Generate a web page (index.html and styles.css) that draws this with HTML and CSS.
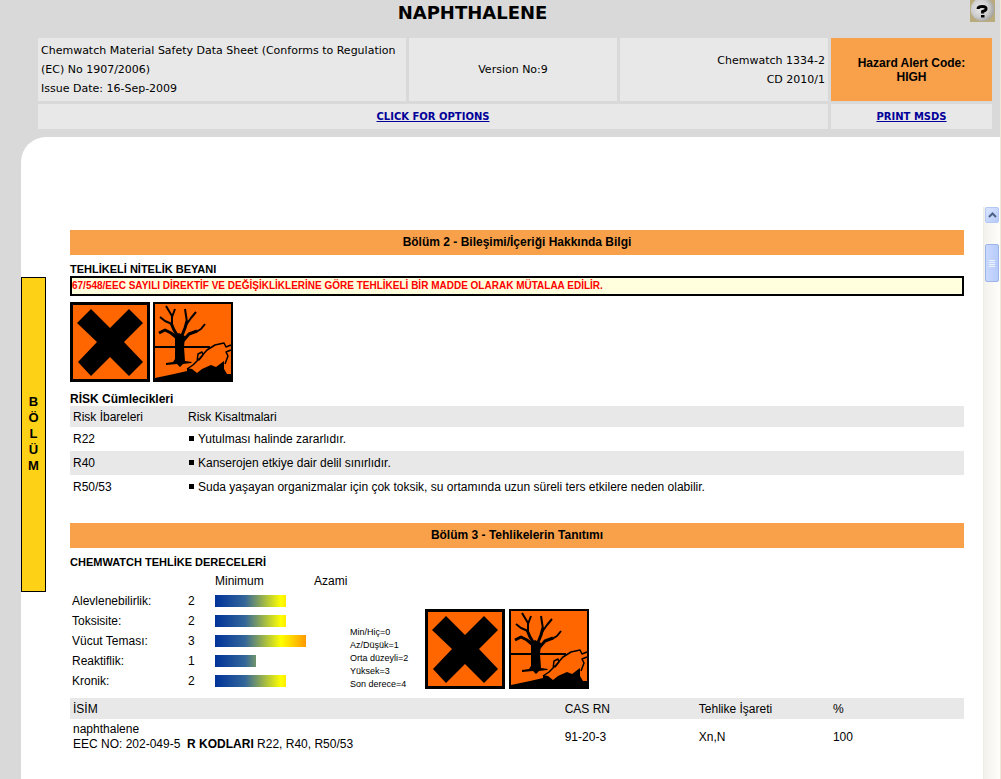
FILE: index.html
```html
<!DOCTYPE html>
<html lang="tr">
<head>
<meta charset="utf-8">
<title>Naphthalene</title>
<link rel="stylesheet" href="styles.css">
</head>
<body>
<svg class="symbols" aria-hidden="true">
  <symbol id="harmful" viewBox="0 0 80 80">
    <rect width="80" height="80" fill="#000"/>
    <rect x="3" y="3" width="74" height="74" fill="#ff6600"/>
    <path d="M7 21 21 7 40 26 59 7 73 21 54 40 73 60 59 74 40 55 21 74 8 60 27 40Z"/>
  </symbol>
  <symbol id="environment" viewBox="0 0 80 80">
    <rect width="80" height="80" fill="#000"/>
    <rect x="2" y="2" width="76" height="76" fill="#ff6600"/>
    <path d="M2 45H57" stroke="#000" stroke-width="2"/>
    <path d="M22 34 26 31 32 34 31 45 32 59 39 60 38 61 30 62 27 65 24 62 13 63 13 61 20 60 22 57Z"/>
    <g fill="none" stroke="#000" stroke-linejoin="round">
      <path d="M6 31 12 28 18 31 24 36M18 21 21 28 26 36M34 19 32 26 28 36M44 29 36 32 30 39" stroke-width="3"/>
      <path d="M7 15 12 19 19 22M13 4 19 14 19 24M22 7 19 15M32 7 34 20M43 10 38 16 33 23M52 22 48 27 43 30" stroke-width="2"/>
      <path d="M34 67 40 63 47 56 54 48 62 43 71 41 73 45 78 43M78 48 73 50 75 54 72 62M44 60 45 52 49 50 50 53 46 58" stroke-width="1.500"/>
    </g>
    <path d="M2 76 21 72 34 69 34 66 39 67 44 71 49 67 58 63 63 65 71 59 71 67 74 72 78 72 78 78 2 78Z"/>
  </symbol>
</svg>

<div class="page">
  <header class="masthead">
    <div class="title-row">
      <h1 class="title">NAPHTHALENE</h1>
      <button class="help" type="button" aria-label="Help">
        <svg viewBox="0 0 25 22" width="25" height="22">
          <defs>
            <radialGradient id="ball" cx=".4" cy=".45" r=".6">
              <stop offset="0" stop-color="#e9e9e9"/>
              <stop offset=".6" stop-color="#cfcfcf"/>
              <stop offset="1" stop-color="#a2a2a0"/>
            </radialGradient>
          </defs>
          <rect width="25" height="22" fill="#b9ab7c"/>
          <circle cx="12.5" cy="9.5" r="11.8" fill="url(#ball)"/>
          <path d="M8 9Q8 6.500 12.300 6.500T16 9Q16 10.500 12.600 11.500V13.500" fill="none" stroke="#000" stroke-width="3"/>
          <rect x="11" y="15" width="3.500" height="2.500"/>
        </svg>
      </button>
    </div>
    <div class="info">
      <div class="cell">Chemwatch Material Safety Data Sheet (Conforms to Regulation (EC) No 1907/2006)<br>Issue Date: 16-Sep-2009</div>
      <div class="cell center">Version No:9</div>
      <div class="cell right">Chemwatch 1334-2<br>CD 2010/1</div>
      <div class="cell alert">Hazard Alert Code:<br>HIGH</div>
      <div class="cell center options"><a href="#options">CLICK FOR OPTIONS</a></div>
      <div class="cell center"><a href="#print">PRINT MSDS</a></div>
    </div>
  </header>

  <div class="panel">
    <aside class="tab"><span>B</span><span>Ö</span><span>L</span><span>Ü</span><span>M</span></aside>

    <main class="content">
      <section class="section">
        <h2 class="bar">Bölüm 2 - Bileşimi/İçeriği Hakkında Bilgi</h2>
        <h3 class="sub caps">TEHLİKELİ NİTELİK BEYANI</h3>
        <p class="notice">67/548/EEC SAYILI DİREKTİF VE DEĞİŞİKLİKLERİNE GÖRE TEHLİKELİ BİR MADDE OLARAK MÜTALAA EDİLİR.</p>
        <div class="signs">
          <svg class="sign"><use href="#harmful"/></svg>
          <svg class="sign"><use href="#environment"/></svg>
        </div>
        <h3 class="sub">RİSK Cümlecikleri</h3>
        <table class="grid risks">
          <thead><tr><th>Risk İbareleri</th><th>Risk Kisaltmalari</th></tr></thead>
          <tbody>
            <tr><td>R22</td><td><i class="dot"></i>Yutulması halinde zararlıdır.</td></tr>
            <tr><td>R40</td><td><i class="dot"></i>Kanserojen etkiye dair delil sınırlıdır.</td></tr>
            <tr><td>R50/53</td><td><i class="dot"></i>Suda yaşayan organizmalar için çok toksik, su ortamında uzun süreli ters etkilere neden olabilir.</td></tr>
          </tbody>
        </table>
      </section>

      <section class="section">
        <h2 class="bar">Bölüm 3 - Tehlikelerin Tanıtımı</h2>
        <h3 class="sub caps">CHEMWATCH TEHLİKE DERECELERİ</h3>
        <div class="ratings-row">
          <table class="ratings">
            <thead><tr><th></th><th></th><th>Minimum</th><th>Azami</th></tr></thead>
            <tbody>
              <tr><td>Alevlenebilirlik:</td><td>2</td><td colspan="2"><div class="meter level-2"></div></td></tr>
              <tr><td>Toksisite:</td><td>2</td><td colspan="2"><div class="meter level-2"></div></td></tr>
              <tr><td>Vücut Teması:</td><td>3</td><td colspan="2"><div class="meter level-3"></div></td></tr>
              <tr><td>Reaktiflik:</td><td>1</td><td colspan="2"><div class="meter level-1"></div></td></tr>
              <tr><td>Kronik:</td><td>2</td><td colspan="2"><div class="meter level-2"></div></td></tr>
            </tbody>
          </table>
          <div class="legend">Min/Hiç=0<br>Az/Düşük=1<br>Orta düzeyli=2<br>Yüksek=3<br>Son derece=4</div>
          <div class="signs">
            <svg class="sign"><use href="#harmful"/></svg>
            <svg class="sign"><use href="#environment"/></svg>
          </div>
        </div>
        <table class="grid names">
          <thead><tr><th>İSİM</th><th>CAS RN</th><th>Tehlike İşareti</th><th>%</th></tr></thead>
          <tbody>
            <tr><td>naphthalene<br>EEC NO: 202-049-5&nbsp; <b>R KODLARI</b> R22, R40, R50/53</td><td>91-20-3</td><td>Xn,N</td><td>100</td></tr>
          </tbody>
        </table>
      </section>
    </main>

    <div class="scroll">
      <button class="scroll-up" type="button" aria-label="Scroll up">
        <svg viewBox="0 0 9 6" width="9" height="6"><path d="M1 5 4.500 1.500 8 5" fill="none" stroke="#4d6185" stroke-width="2"/></svg>
      </button>
      <div class="thumb"><i></i><i></i><i></i><i></i></div>
    </div>
  </div>
</div>
</body>
</html>
```
FILE: styles.css
```css
* { box-sizing: border-box; }

body {
  margin: 0;
  overflow: hidden;
  background: #d9d9d9;
  color: #000;
  font: 12px/14px "Liberation Sans", Arial, sans-serif;
}

h1, h2, h3, p { margin: 0; font-size: inherit; }

.symbols { position: absolute; width: 0; height: 0; }

.page {
  display: flex;
  flex-direction: column;
  height: 100vh;
  border-right: 1px solid #ece9d8;
}

.masthead {
  flex: none;
  padding-bottom: 8px;
  font: 11px/19px "DejaVu Sans", Verdana, sans-serif;
}

.title-row { display: flex; gap: 25px; height: 38px; padding-right: 5px; }

.title {
  flex: 1;
  text-align: center;
  font-size: 18px;
  line-height: 26px;
}

.help { width: 25px; height: 22px; padding: 0; border: 0; background: none; }
.help svg { display: block; }

.info {
  display: grid;
  grid-template-columns: 368fr 208fr 208fr 161fr;
  grid-template-rows: minmax(63px, auto) 25px;
  gap: 3px;
  margin: 0 8px 0 38px;
}

.cell {
  display: flex;
  flex-direction: column;
  justify-content: center;
  padding: 0 3px;
  background: #e8e8e8;
}
.cell.center { text-align: center; }
.cell.right { text-align: right; }
.cell.options { grid-column: span 3; }
.cell a { color: #000099; font-size: 10px; font-weight: bold; }

.cell.alert {
  background: #f8a04a;
  font: bold 12px/14px "Liberation Sans", Arial, sans-serif;
  text-align: center;
}

.panel {
  flex: 1;
  display: grid;
  grid-template-columns: 25px 1fr 17px;
  align-items: start;
  min-height: 0;
  margin-left: 21px;
  padding-top: 70px;
  overflow: hidden;
  background: #fff;
  border-top-left-radius: 25px;
}

.tab {
  display: flex;
  flex-direction: column;
  align-items: center;
  justify-content: center;
  height: 315px;
  margin-top: 70px;
  padding-bottom: 2px;
  border: 1px solid #000;
  background: #fcd116;
  font-size: 13px;
  font-weight: bold;
  line-height: 16px;
}

.content { padding: 23px 19px 0 24px; }

.section + .section { margin-top: 24px; }

.bar {
  background: #f8a04a;
  line-height: 25px;
  text-align: center;
}

.sub { margin-top: 7px; }
.caps { font-size: 11px; }

.notice {
  padding: 1px 0;
  border: 2px solid #000;
  background: #ffffdd;
  color: #ff0000;
  font-size: 10px;
  font-weight: bold;
}

.signs { display: flex; gap: 3px; }
.sign { display: block; width: 80px; height: 80px; }
.notice + .signs { margin: 6px 0 10px; }

.grid { width: 100%; table-layout: fixed; border-collapse: collapse; }
.grid th, .grid td { padding: 0 3px; text-align: left; font-weight: normal; }
.grid th { height: 21px; background: #e8e8e8; }

.risks th:first-child { width: 115px; }
.risks td { height: 24px; }
.risks tbody tr:nth-child(even) { background: #e8e8e8; }

.dot {
  display: inline-block;
  width: 5px;
  height: 5px;
  margin: 0 4px 2px 1px;
  background: #000;
}

.ratings-row { display: flex; align-items: flex-end; margin-bottom: 7px; }
.ratings { width: 280px; table-layout: fixed; border-collapse: collapse; margin-top: 2px; }
.ratings th, .ratings td { height: 20px; padding: 0; text-align: left; font-weight: normal; }
.ratings th:nth-child(1) { width: 118px; }
.ratings th:nth-child(2) { width: 27px; }
.ratings th:nth-child(3) { width: 99px; }
.ratings td:first-child { padding-left: 2px; }

.meter {
  height: 12px;
  background: linear-gradient(90deg, #003399 0, #336699 30px, #ffff00 66px, #ff9900 91px);
}
.level-1 { width: 41px; }
/* The scale is drawn in pixels, so shorter meters cut it off early. */
.level-2 { width: 71px; }
.level-3 { width: 91px; }

.legend {
  width: 75px;
  font-size: 9px;
  line-height: 13px;
}
.ratings-row .signs { gap: 4px; padding-bottom: 2px; }

.names th:first-child { width: 55%; }
.names td { height: 36px; }
.names td:first-child { line-height: 15px; }

.scroll {
  align-self: stretch;
  display: flex;
  flex-direction: column;
  align-items: center;
  gap: 21px;
  border-left: 1px solid #eeede5;
  background: linear-gradient(90deg, #f3f1ec, #fefefb);
}

.scroll-up {
  display: flex;
  align-items: center;
  justify-content: center;
  width: 14px;
  height: 16px;
  padding: 0;
  border: 1px solid #b4c8f6;
  border-radius: 2px;
  background: linear-gradient(135deg, #dbe5ff, #b6cbf9);
}

.thumb {
  display: flex;
  flex-direction: column;
  align-items: center;
  justify-content: center;
  gap: 1px;
  width: 14px;
  height: 38px;
  border: 1px solid #9db5ea;
  border-radius: 2px;
  background: linear-gradient(90deg, #c9d8fd, #b7cbfa);
}
.thumb i { width: 6px; height: 1px; background: #eef4fe; }
```
